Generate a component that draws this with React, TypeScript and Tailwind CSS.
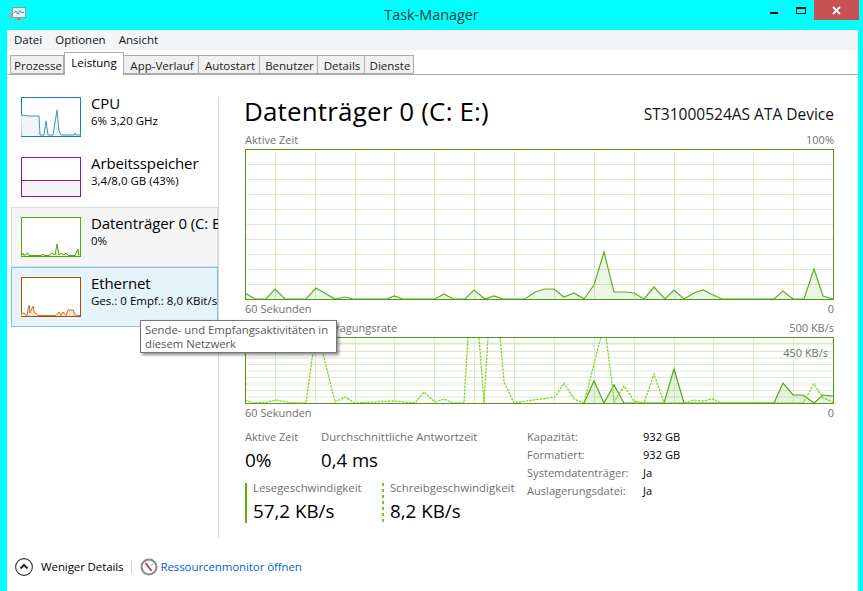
const GRID_X = [30, 70, 110, 149, 189, 229, 269, 309, 349, 389, 429, 468, 508, 548];
const GRID_Y_TOP = [15, 30, 45, 60, 75, 90, 105, 120, 135];
const GRID_Y_BOTTOM = [14, 20.5, 27, 33.5, 40, 46.5, 53, 59.5];

const ACTIVE_TIME = "0,144 10,150 21,150 30,140 40,150 61,150 71,139 90,150 100,148 108,150 142,150 149,147 158,150 190,150 199,145 208,150 220,150 229,141 240,150 249,147 258,150 280,150 290,143 300,140 309,140 319,148 329,144 339,150 349,136 359,103 369,143 380,143 389,144 399,150 409,138 420,150 429,141 439,150 449,144 458,141 468,146 477,150 529,150 538,142 548,150 559,150 569,120 578,147 588,150";
const READ_RATE = "339,66 349,44 359,66 369,48 379,66 419,66 429,32 439,66 529,66 538,46 548,58 558,58 569,66 578,58 588,59";
const WRITE_RATE = "0,63 8,66 22,65 31,63 47,66 61,66 70,0 74,0 90,65 100,60 110,66 148,64 170,66 179,55 190,65 199,62 208,66 219,66 223,0 234,0 239,66 243,0 255,0 259,45 269,66 288,63 305,61 310,60 319,46 329,62 339,66 356,0 361,0 367,46 369,65 379,49 389,64 399,66 409,37 419,66 439,66 449,63 458,64 468,62 477,66 529,66 558,66 569,47 578,61 588,65";

const CPU_THUMB = "0,18 7,19 18,19 19,38 23,38 25,24 27,38 32,38 36,13 38,34 40,38 53,38 54,36 55,38 59,38";
const DISK_THUMB = "0,39 2,36 3,38.5 7,36 8,38.5 20,38.5 22,37 23,38.5 28,38.5 31,36 34,38 36,27 38,38 40,36 43,38 45,36 47,38.5 54,38.5 57,32 58,38.5";
const NET_THUMB = "0,37 3,36 6,38.5 8,28 9,36 12,29 13,35 17,38.5 35,38.5 38,35 40,38.5 42,35 45,38.5 47,33 52,33 54,38 59,38.5";

const tabs = [
    { name: "Prozesse", width: "w-[54px]" },
    { name: "Leistung", width: "w-[60px]", active: true },
    { name: "App-Verlauf", width: "w-[75px]" },
    { name: "Autostart", width: "w-[61px]" },
    { name: "Benutzer", width: "w-[58px]" },
    { name: "Details", width: "w-[47px]" },
    { name: "Dienste", width: "w-[49px]" },
];

const details = [
    ["Kapazität:", "932 GB"],
    ["Formatiert:", "932 GB"],
    ["Systemdatenträger:", "Ja"],
    ["Auslagerungsdatei:", "Ja"],
];

const Tab = (props: { name: string, width: string, active?: boolean }) => {
    const { name, width, active } = props;
    if (active) {
        return <div className={`${width} h-[23px] bg-white border border-b-0 border-[#acacac] -mb-px z-10 text-center text-[11.5px] leading-[20px] text-black`}>{name}</div>;
    }
    return <div className={`${width} h-[19px] pl-[2px] bg-[#f0f0f0] border border-l-0 first:border-l border-[#acacac] text-center text-[11.5px] leading-[19px] text-[#1a1a1a]`}>{name}</div>;
};

const Thumb = (props: { border: string, stroke: string, fill: string, points: string }) => {
    const { border, stroke, fill, points } = props;
    return (
        <svg width="60" height="40" viewBox="0 0 60 40" className="shrink-0 block">
            <rect x="0.5" y="0.5" width="59" height="39" fill="#fff" stroke={border} />
            <polygon points={`0.5,39 ${points} 59.5,39`} fill={fill} stroke="none" />
            <polyline points={points} fill="none" stroke={stroke} strokeWidth="1" />
        </svg>
    );
};

const MemoryThumb = () => (
    <svg width="60" height="40" viewBox="0 0 60 40" className="shrink-0 block">
        <rect x="0.5" y="23.5" width="59" height="16" fill="#f4f2f4" />
        <rect x="0.5" y="0.5" width="59" height="39" fill="none" stroke="#8b12ae" />
        <line x1="0" y1="23.5" x2="60" y2="23.5" stroke="#8b12ae" />
    </svg>
);

const SideItem = (props: { title: string, sub: string, className: string, children: React.ReactNode }) => {
    const { title, sub, className, children } = props;
    return (
        <div className={`h-[60px] flex items-start overflow-hidden whitespace-nowrap ${className}`}>
            <div className="mt-[10px] ml-[10px] shrink-0">{children}</div>
            <div className="ml-[10px] mt-[5px]">
                <p className="text-[15px] leading-[22px] text-black tracking-[-0.1px]">{title}</p>
                <p className="mt-px text-[11.5px] leading-[12px] text-black">{sub}</p>
            </div>
        </div>
    );
};

const Chart = (props: { height: number, rows: number[], children: React.ReactNode }) => {
    const { height, rows, children } = props;
    return (
        <svg width="589" height={height} viewBox={`0 0 589 ${height}`} className="block">
            {GRID_X.map((x) => <line key={x} x1={x + 0.5} y1="0" x2={x + 0.5} y2={height} stroke="#d9ebc9" />)}
            {rows.map((y) => <line key={y} x1="0" y1={y + 0.5} x2="589" y2={y + 0.5} stroke="#d9ebc9" />)}
            {children}
            <rect x="0.5" y="0.5" width="588" height={height - 1} fill="none" stroke="#4c9c12" />
        </svg>
    );
};

const Gauge = () => (
    <svg width="18" height="18" viewBox="0 0 18 18" className="block">
        <circle cx="9" cy="9" r="7.5" fill="#fff" stroke="#8c8a85" strokeWidth="2" />
        <line x1="5.5" y1="5" x2="11.5" y2="13" stroke="#c9281e" strokeWidth="1.6" />
        <line x1="13" y1="5.5" x2="11.5" y2="7.5" stroke="#8a8a8a" strokeWidth="1" />
    </svg>
);

const AppIcon = () => (
    <svg width="17" height="15" viewBox="0 0 17 15" className="block">
        <rect x="0.5" y="5" width="2.5" height="8" fill="#9fb0a9" />
        <rect x="3.5" y="0.5" width="13" height="10" fill="#dff7fb" stroke="#8a9aa0" />
        <polyline points="5,6 7,4 9,7 11,3.5 13,6 15,5" fill="none" stroke="#3f86c7" strokeWidth="1" />
        <rect x="8" y="11" width="4" height="2" fill="#8a9aa0" />
        <rect x="6" y="13" width="8" height="1.5" fill="#a8b4b8" />
    </svg>
);

export default function App() {
    return (
        <div className="relative w-[863px] h-[591px] overflow-hidden bg-[#00ffff] flex flex-col font-['Open_Sans',sans-serif]">
            <div className="h-[30px] shrink-0 grid grid-cols-3">
                <div className="pl-[9px] pt-[7px]"><AppIcon /></div>
                <div className="text-center text-[14.4px] leading-[29px] text-[#1b3f42] whitespace-nowrap">Task-Manager</div>
                <div className="flex justify-end pr-[4px] items-start">
                    <div className="w-[8px] h-[2px] mt-[12px] mr-[18px] bg-[#111]"></div>
                    <div className="w-[10px] h-[7px] mt-[7px] mr-[8px] border border-t-2 border-[#111]"></div>
                    <div className="w-[45px] h-[20px] bg-[#c75050] flex items-center justify-center">
                        <svg width="9" height="9" viewBox="0 0 9 9"><path d="M1 1 L8 8 M8 1 L1 8" stroke="#fff" strokeWidth="1.8" /></svg>
                    </div>
                </div>
            </div>

            <div className="flex-1 ml-[7px] mr-[5px] bg-white flex flex-col min-h-0">
                <div className="h-[20px] shrink-0 bg-[#f4f5f7] border-b border-[#eeeeee] flex items-center pl-[7px] gap-[13px] text-[11.5px] text-[#111]">
                    <span>Datei</span>
                    <span>Optionen</span>
                    <span>Ansicht</span>
                </div>

                <div className="h-[25px] shrink-0 border-b border-[#acacac] flex items-end pl-[3px]">
                    {tabs.map((tab) => <Tab key={tab.name} name={tab.name} width={tab.width} active={tab.active} />)}
                </div>

                <div className="flex flex-1 min-h-0">
                    <div className="w-[212px] shrink-0 self-start mt-[22px] h-[441px] border-r border-[#d9d9d9] pl-[4px]">
                        <div className="-mt-[10px]">
                            <SideItem title="CPU" sub="6%  3,20 GHz" className="">
                                <Thumb border="#1a7fb8" stroke="#3f93c6" fill="#f0f5fa" points={CPU_THUMB} />
                            </SideItem>
                            <SideItem title="Arbeitsspeicher" sub="3,4/8,0 GB (43%)" className="">
                                <MemoryThumb />
                            </SideItem>
                            <SideItem title="Datenträger 0 (C: E:)" sub="0%" className="bg-[#f5f5f5] ring-1 ring-inset ring-[#dedede]">
                                <Thumb border="#54a80e" stroke="#54a80e" fill="#e3f0d6" points={DISK_THUMB} />
                            </SideItem>
                            <SideItem title="Ethernet" sub="Ges.: 0 Empf.: 8,0 KBit/s" className="bg-[#e5f3fb] ring-1 ring-inset ring-[#7dc2e8]">
                                <Thumb border="#a74f01" stroke="#c8702a" fill="#fbe6d6" points={NET_THUMB} />
                            </SideItem>
                        </div>
                    </div>

                    <div className="flex-1 pl-[26px] pt-[20px]">
                        <div className="w-[589px]">
                            <div className="h-[36px] flex items-center justify-between whitespace-nowrap">
                                <span className="text-[26px] leading-[32px] -mt-[4px] -ml-px text-black tracking-[0.15px]">Datenträger 0 (C: E:)</span>
                                <span className="text-[15.5px] pt-[4px] text-[#111]">ST31000524AS ATA Device</span>
                            </div>
                            <div className="h-[18px] flex items-center justify-between text-[11px] text-[#707070]">
                                <span>Aktive Zeit</span>
                                <span>100%</span>
                            </div>
                            <Chart height={151} rows={GRID_Y_TOP}>
                                <polygon points={`0,150 ${ACTIVE_TIME}`} fill="#4c9c12" fillOpacity="0.1" />
                                <polyline points={ACTIVE_TIME} fill="none" stroke="#5fae1f" strokeWidth="1.2" />
                            </Chart>
                            <div className="h-[18px] flex items-center justify-between text-[11px] text-[#707070]">
                                <span>60 Sekunden</span>
                                <span>0</span>
                            </div>

                            <div className="h-[18px] mt-px flex items-center justify-between text-[11px] text-[#707070]">
                                <span>Datenträgerübertragungsrate</span>
                                <span>500 KB/s</span>
                            </div>
                            <div className="relative">
                                <Chart height={67} rows={GRID_Y_BOTTOM}>
                                    <line x1="0" y1="6.5" x2="589" y2="6.5" stroke="#d9ebc9" strokeWidth="2" />
                                    <polygon points={`${READ_RATE} 588,66`} fill="#4c9c12" fillOpacity="0.12" />
                                    <polyline points={READ_RATE} fill="none" stroke="#55a518" strokeWidth="1.2" />
                                    <polyline points={WRITE_RATE} fill="none" stroke="#86d32f" strokeWidth="1.3" strokeDasharray="2.5 1" />
                                </Chart>
                                <span className="absolute right-[6px] top-[8px] text-[11px] leading-[16px] text-[#707070]">450 KB/s</span>
                            </div>
                            <div className="h-[18px] flex items-center justify-between text-[11px] text-[#707070]">
                                <span>60 Sekunden</span>
                                <span>0</span>
                            </div>

                            <div className="mt-[6px] flex">
                                <div className="w-[282px] shrink-0">
                                    <div className="flex">
                                        <div className="w-[76px]">
                                            <p className="h-[18px] text-[11px] leading-[18px] text-[#707070] whitespace-nowrap">Aktive Zeit</p>
                                            <p className="h-[28px] text-[19px] leading-[28px] text-black">0%</p>
                                        </div>
                                        <div>
                                            <p className="h-[18px] text-[11.35px] leading-[18px] text-[#707070] whitespace-nowrap">Durchschnittliche Antwortzeit</p>
                                            <p className="h-[28px] text-[18.6px] leading-[28px] text-black">0,4 ms</p>
                                        </div>
                                    </div>
                                    <div className="flex mt-[9px] h-[40px]">
                                        <div className="w-[137px] flex">
                                            <div className="w-[2px] h-[40px] bg-[#5cae00]"></div>
                                            <div className="pl-[6px]">
                                                <p className="text-[11.4px] leading-[10px] text-[#707070] whitespace-nowrap">Lesegeschwindigkeit</p>
                                                <p className="mt-[4px] text-[18.8px] leading-[28px] text-black whitespace-nowrap">57,2 KB/s</p>
                                            </div>
                                        </div>
                                        <div className="flex">
                                            <div className="w-[2px] h-[40px] bg-[repeating-linear-gradient(to_bottom,#7cc520_0,#7cc520_3px,transparent_3px,transparent_6px)]"></div>
                                            <div className="pl-[6px]">
                                                <p className="text-[11.45px] leading-[10px] text-[#707070] whitespace-nowrap">Schreibgeschwindigkeit</p>
                                                <p className="mt-[4px] text-[18.8px] leading-[28px] text-black whitespace-nowrap">8,2 KB/s</p>
                                            </div>
                                        </div>
                                    </div>
                                </div>
                                <div className="grid grid-cols-[116px_auto] auto-rows-[18px] text-[11.1px] leading-[18px]">
                                    {details.map(([label, value]) => (
                                        <div key={label} className="contents">
                                            <span className="text-[#707070] whitespace-nowrap">{label}</span>
                                            <span className="text-black">{value}</span>
                                        </div>
                                    ))}
                                </div>
                            </div>
                        </div>
                    </div>
                </div>

                <div className="h-[51px] shrink-0 pt-[3px] pl-[8px] flex items-center">
                    <svg width="18" height="18" viewBox="0 0 18 18" className="block">
                        <circle cx="9" cy="9" r="8.4" fill="#fff" stroke="#333" strokeWidth="1.1" />
                        <path d="M5.5 10.5 L9 7 L12.5 10.5" fill="none" stroke="#222" strokeWidth="2" />
                    </svg>
                    <span className="ml-[8px] text-[11.5px] text-black whitespace-nowrap tracking-[-0.1px]">Weniger Details</span>
                    <div className="w-px h-[14px] bg-[#d0d0d0] ml-[7px] mr-[8px]"></div>
                    <Gauge />
                    <span className="ml-[3px] text-[11.5px] text-[#0066cc] whitespace-nowrap tracking-[-0.1px]">Ressourcenmonitor öffnen</span>
                </div>
            </div>

            <div className="absolute left-[140px] top-[320px] w-[197px] h-[33px] bg-white border border-[#767676] shadow-[2px_2px_3px_rgba(0,0,0,0.45)] px-[4px] pt-[2px] text-[11.3px] leading-[14px] text-[#575757]">
                Sende- und Empfangsaktivitäten in diesem Netzwerk
            </div>
        </div>
    );
}
